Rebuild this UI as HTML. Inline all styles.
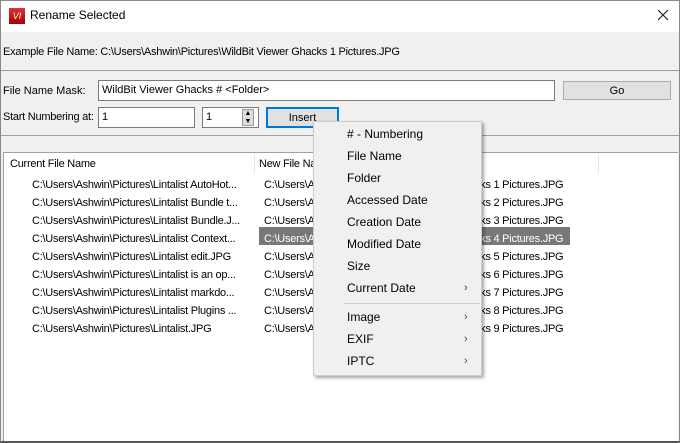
<!DOCTYPE html>
<html><head><style>
*{box-sizing:border-box;margin:0;padding:0}
body{width:680px;height:443px;overflow:hidden;background:#f0f0f0;font-family:"Liberation Sans",Tahoma,sans-serif;font-size:11px;color:#000;position:relative}
.a{position:absolute;white-space:nowrap}
.win{position:absolute;left:0;top:0;width:680px;height:443px;border:1px solid #888;border-bottom:2px solid #555}
.tb{position:absolute;left:1px;top:1px;width:678px;height:31px;background:#fff}
.inp{position:absolute;background:#fff;border:1px solid #7a7a7a;padding-left:3px;line-height:18px}
.btn{position:absolute;background:#e1e1e1;border:1px solid #adadad;text-align:center;line-height:17px}
.list{position:absolute;left:3px;top:152px;width:675px;height:289px;background:#fff;border-top:1px solid #a0a0a0;border-left:1px solid #a0a0a0}
.menu{position:absolute;left:313px;top:121px;width:169px;height:255px;background:#f0f0f0;border:1px solid #ccc;box-shadow:2px 2px 3px rgba(0,0,0,.35);font-size:12px}
.mi{position:absolute;left:33px}
.ar{position:absolute;left:150px;font-size:11px;color:#444}
.sel{position:absolute;left:259px;top:227px;width:311px;height:18px;background:#787878}
.ls{letter-spacing:-0.25px}
</style></head><body>
<div class="win"></div>
<div class="tb"></div>
<div class="a" style="left:9px;top:8px;width:16px;height:16px;background:linear-gradient(#d33,#a00);color:#fff;font-size:9px;font-style:italic;text-align:center;line-height:16px">VI</div>
<div class="a" style="left:30px;top:8px;font-size:12px">Rename Selected</div>
<svg class="a" style="left:657px;top:9px" width="12" height="12"><path d="M1 1L11 11M11 1L1 11" stroke="#222" stroke-width="1.2"/></svg>
<div class="a ls" style="left:3px;top:46px">Example File Name: C:\Users\Ashwin\Pictures\WildBit Viewer Ghacks 1 Pictures.JPG</div>
<div class="a" style="left:1px;top:70px;width:678px;height:1px;background:#a0a0a0"></div>
<div class="a" style="left:3px;top:85px">File Name Mask:</div>
<div class="inp" style="left:98px;top:80px;width:457px;height:21px">WildBit Viewer Ghacks # &lt;Folder&gt;</div>
<div class="btn" style="left:563px;top:81px;width:108px;height:19px;line-height:18px">Go</div>
<div class="a ls" style="left:3px;top:111px">Start Numbering at:</div>
<div class="inp" style="left:98px;top:107px;width:97px;height:21px">1</div>
<div class="inp" style="left:202px;top:107px;width:57px;height:21px">1</div>
<div class="a" style="left:242px;top:109px;width:12px;height:17px;background:#ddd;border:1px solid #999;font-size:7px;line-height:8px;text-align:center">▲<br>▼</div>
<div class="btn" style="left:266px;top:107px;width:73px;height:21px;border:2px solid #0078d7;line-height:19px">Insert</div>
<div class="a" style="left:1px;top:135px;width:678px;height:1px;background:#a0a0a0"></div>
<div class="list"></div>
<div class="a" style="left:254px;top:155px;width:1px;height:18px;background:#e5e5e5"></div>
<div class="a" style="left:598px;top:155px;width:1px;height:18px;background:#e5e5e5"></div>
<div class="a ls" style="left:10px;top:158px">Current File Name</div>
<div class="a ls" style="left:259px;top:158px">New File Name</div>
<div class="sel"></div>
<div class="a ls" style="left:32px;top:176px;line-height:18px">C:\Users\Ashwin\Pictures\Lintalist AutoHot...<br>C:\Users\Ashwin\Pictures\Lintalist Bundle t...<br>C:\Users\Ashwin\Pictures\Lintalist Bundle.J...<br>C:\Users\Ashwin\Pictures\Lintalist Context...<br>C:\Users\Ashwin\Pictures\Lintalist edit.JPG<br>C:\Users\Ashwin\Pictures\Lintalist is an op...<br>C:\Users\Ashwin\Pictures\Lintalist markdo...<br>C:\Users\Ashwin\Pictures\Lintalist Plugins ...<br>C:\Users\Ashwin\Pictures\Lintalist.JPG</div>
<div class="a ls" style="left:264px;top:176px;line-height:18px">C:\Users\Ashwin\Pictures\WildBit Viewer Ghacks 1 Pictures.JPG<br>C:\Users\Ashwin\Pictures\WildBit Viewer Ghacks 2 Pictures.JPG<br>C:\Users\Ashwin\Pictures\WildBit Viewer Ghacks 3 Pictures.JPG<br><span style="color:#fff">C:\Users\Ashwin\Pictures\WildBit Viewer Ghacks 4 Pictures.JPG</span><br>C:\Users\Ashwin\Pictures\WildBit Viewer Ghacks 5 Pictures.JPG<br>C:\Users\Ashwin\Pictures\WildBit Viewer Ghacks 6 Pictures.JPG<br>C:\Users\Ashwin\Pictures\WildBit Viewer Ghacks 7 Pictures.JPG<br>C:\Users\Ashwin\Pictures\WildBit Viewer Ghacks 8 Pictures.JPG<br>C:\Users\Ashwin\Pictures\WildBit Viewer Ghacks 9 Pictures.JPG</div>
<div class="menu">
<div class="mi" style="top:5px">#&nbsp;-&nbsp;Numbering</div>
<div class="mi" style="top:27px">File Name</div>
<div class="mi" style="top:49px">Folder</div>
<div class="mi" style="top:71px">Accessed Date</div>
<div class="mi" style="top:93px">Creation Date</div>
<div class="mi" style="top:115px">Modified Date</div>
<div class="mi" style="top:137px">Size</div>
<div class="mi" style="top:159px">Current Date</div><div class="ar" style="top:160px">›</div>
<div style="position:absolute;left:30px;top:181px;width:136px;height:1px;background:#ccc"></div>
<div class="mi" style="top:188px">Image</div><div class="ar" style="top:189px">›</div>
<div class="mi" style="top:210px">EXIF</div><div class="ar" style="top:211px">›</div>
<div class="mi" style="top:232px">IPTC</div><div class="ar" style="top:233px">›</div>
</div>
</body></html>
